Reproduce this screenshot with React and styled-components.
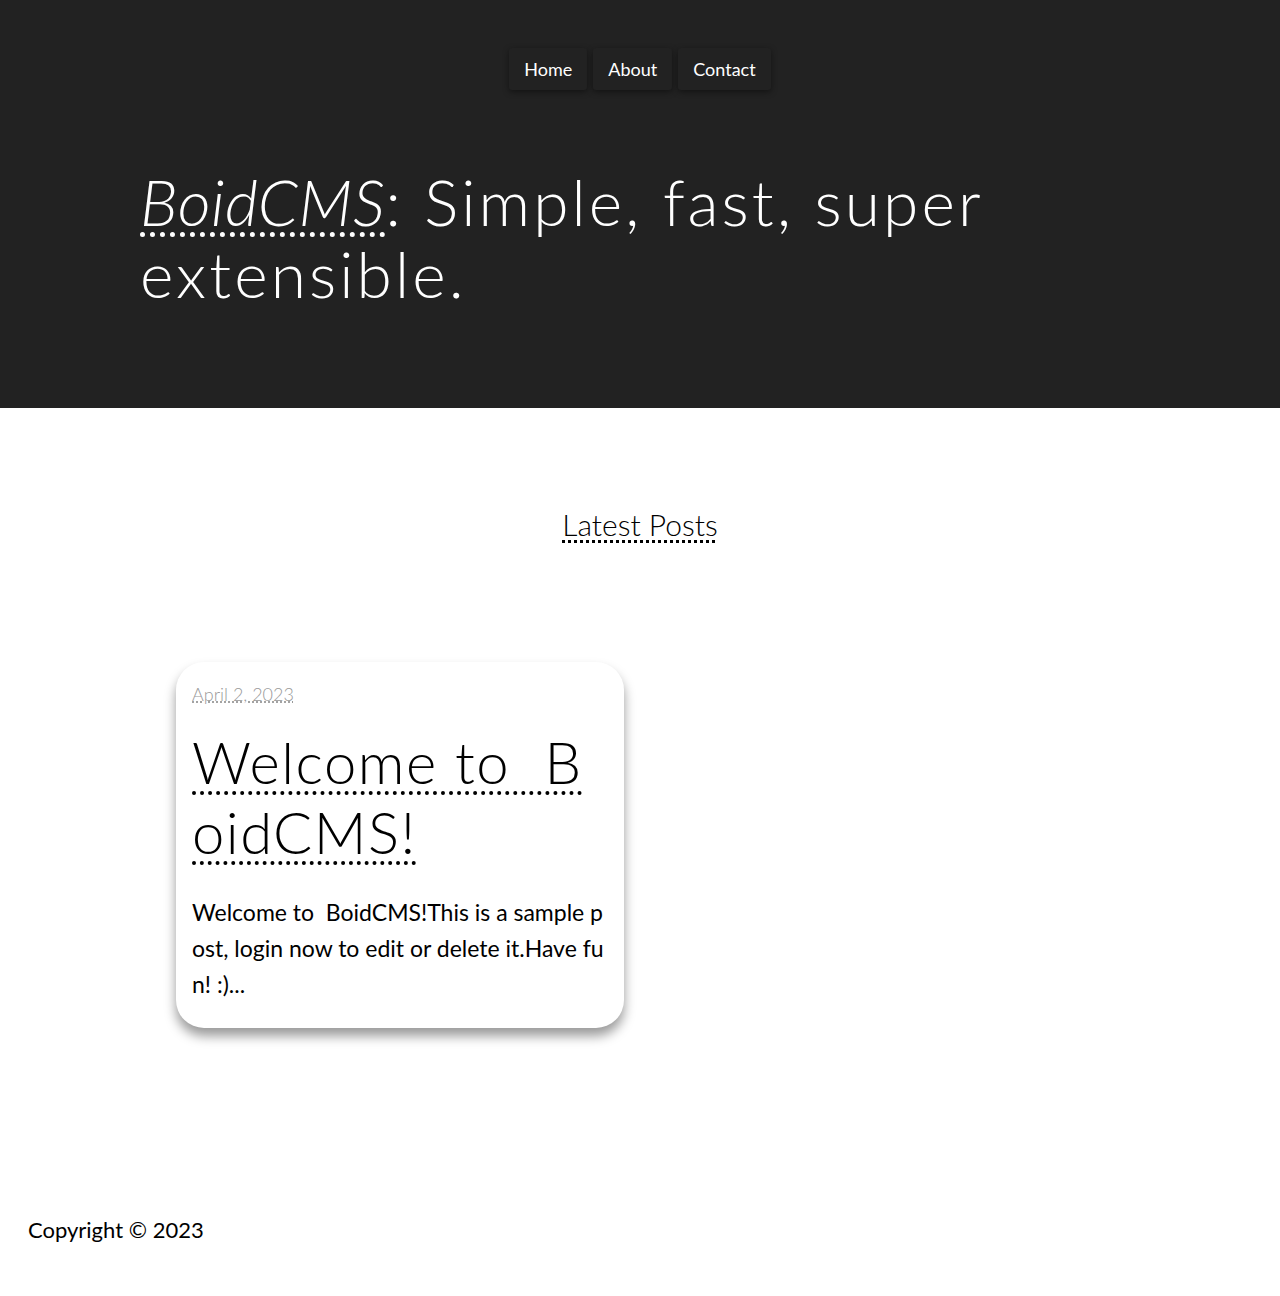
import styled, { createGlobalStyle } from 'styled-components';

const GlobalStyle = createGlobalStyle`
  html, body {
    margin: 0;
    padding: 0;
    background: #fff;
    font-family: Lato, "Liberation Sans", sans-serif;
    color: #000;
  }
`;

const NAV_LINKS = ['Home', 'About', 'Contact'];

export default function App() {
  return (
    <>
      <GlobalStyle />
      <Header>
        <Nav>
          {NAV_LINKS.map((label) => (
            <NavButton key={label} href="#">
              {label}
            </NavButton>
          ))}
        </Nav>
        <HeroTitle>
          <BrandLink href="#">BoidCMS</BrandLink>: Simple, fast, super extensible.
        </HeroTitle>
      </Header>

      <Main>
        <SectionTitle href="#">Latest Posts</SectionTitle>
        <PostGrid>
          <PostCard>
            <PostDate href="#">April 2, 2023</PostDate>
            <PostTitle href="#">Welcome to &nbsp;BoidCMS!</PostTitle>
            <PostExcerpt>
              Welcome to &nbsp;BoidCMS!This is a sample post, login now to edit or delete it.Have fun! :)...
            </PostExcerpt>
          </PostCard>
        </PostGrid>
      </Main>

      <Footer>Copyright © 2023</Footer>
    </>
  );
}

// стили
const Header = styled.header`
  background: #222;
  color: #fff;
  height: 408px;
  box-sizing: border-box;
  padding-top: 48px;
`;

const Nav = styled.nav`
  display: flex;
  justify-content: center;
  gap: 6px;
`;

const NavButton = styled.a`
  display: flex;
  align-items: center;
  height: 42px;
  padding: 0 15px;
  background: #222;
  color: #fff;
  text-decoration: none;
  font-size: 18px;
  border-radius: 3px;
  box-shadow: 0 2px 6px rgba(0, 0, 0, 0.45);
`;

const HeroTitle = styled.h1`
  width: 1000px;
  margin: 76px auto 0;
  font-size: 64px;
  font-weight: 300;
  line-height: 72px;
  letter-spacing: 3.1px;
`;

const BrandLink = styled.a`
  color: #fff;
  font-style: italic;
  letter-spacing: 0.5px;
  text-decoration: underline dotted;
  text-decoration-thickness: 5px;
  text-underline-offset: 6px;
`;

const Main = styled.main`
  display: flex;
  flex-direction: column;
  align-items: center;
  padding-top: 98px;
  min-height: 710px;
`;

const SectionTitle = styled.a`
  font-size: 30px;
  font-weight: 300;
  color: #000;
  text-decoration: underline dotted;
  text-decoration-thickness: 3px;
  text-underline-offset: 4px;
`;

const PostGrid = styled.div`
  display: grid;
  grid-template-columns: repeat(2, 448px);
  gap: 32px;
  margin-top: 120px;
`;

const PostCard = styled.article`
  display: flex;
  flex-direction: column;
  align-items: flex-start;
  padding: 21px 16px 26px;
  border-radius: 28px;
  background: #fff;
  box-shadow: 0 8px 12px rgba(0, 0, 0, 0.4);
`;

const PostDate = styled.a`
  font-size: 18px;
  font-weight: 300;
  color: #999;
  text-decoration: underline dotted;
`;

const PostTitle = styled.a`
  margin-top: 22px;
  font-size: 58px;
  font-weight: 300;
  line-height: 70px;
  letter-spacing: 1.5px;
  color: #000;
  word-break: break-all;
  text-decoration: underline dotted;
  text-decoration-thickness: 4px;
  text-underline-offset: 7px;
`;

const PostExcerpt = styled.p`
  margin: 27px 0 0;
  font-size: 23px;
  line-height: 36px;
  word-break: break-all;
`;

const Footer = styled.footer`
  padding: 0 28px 50px;
  font-size: 22px;
`;
